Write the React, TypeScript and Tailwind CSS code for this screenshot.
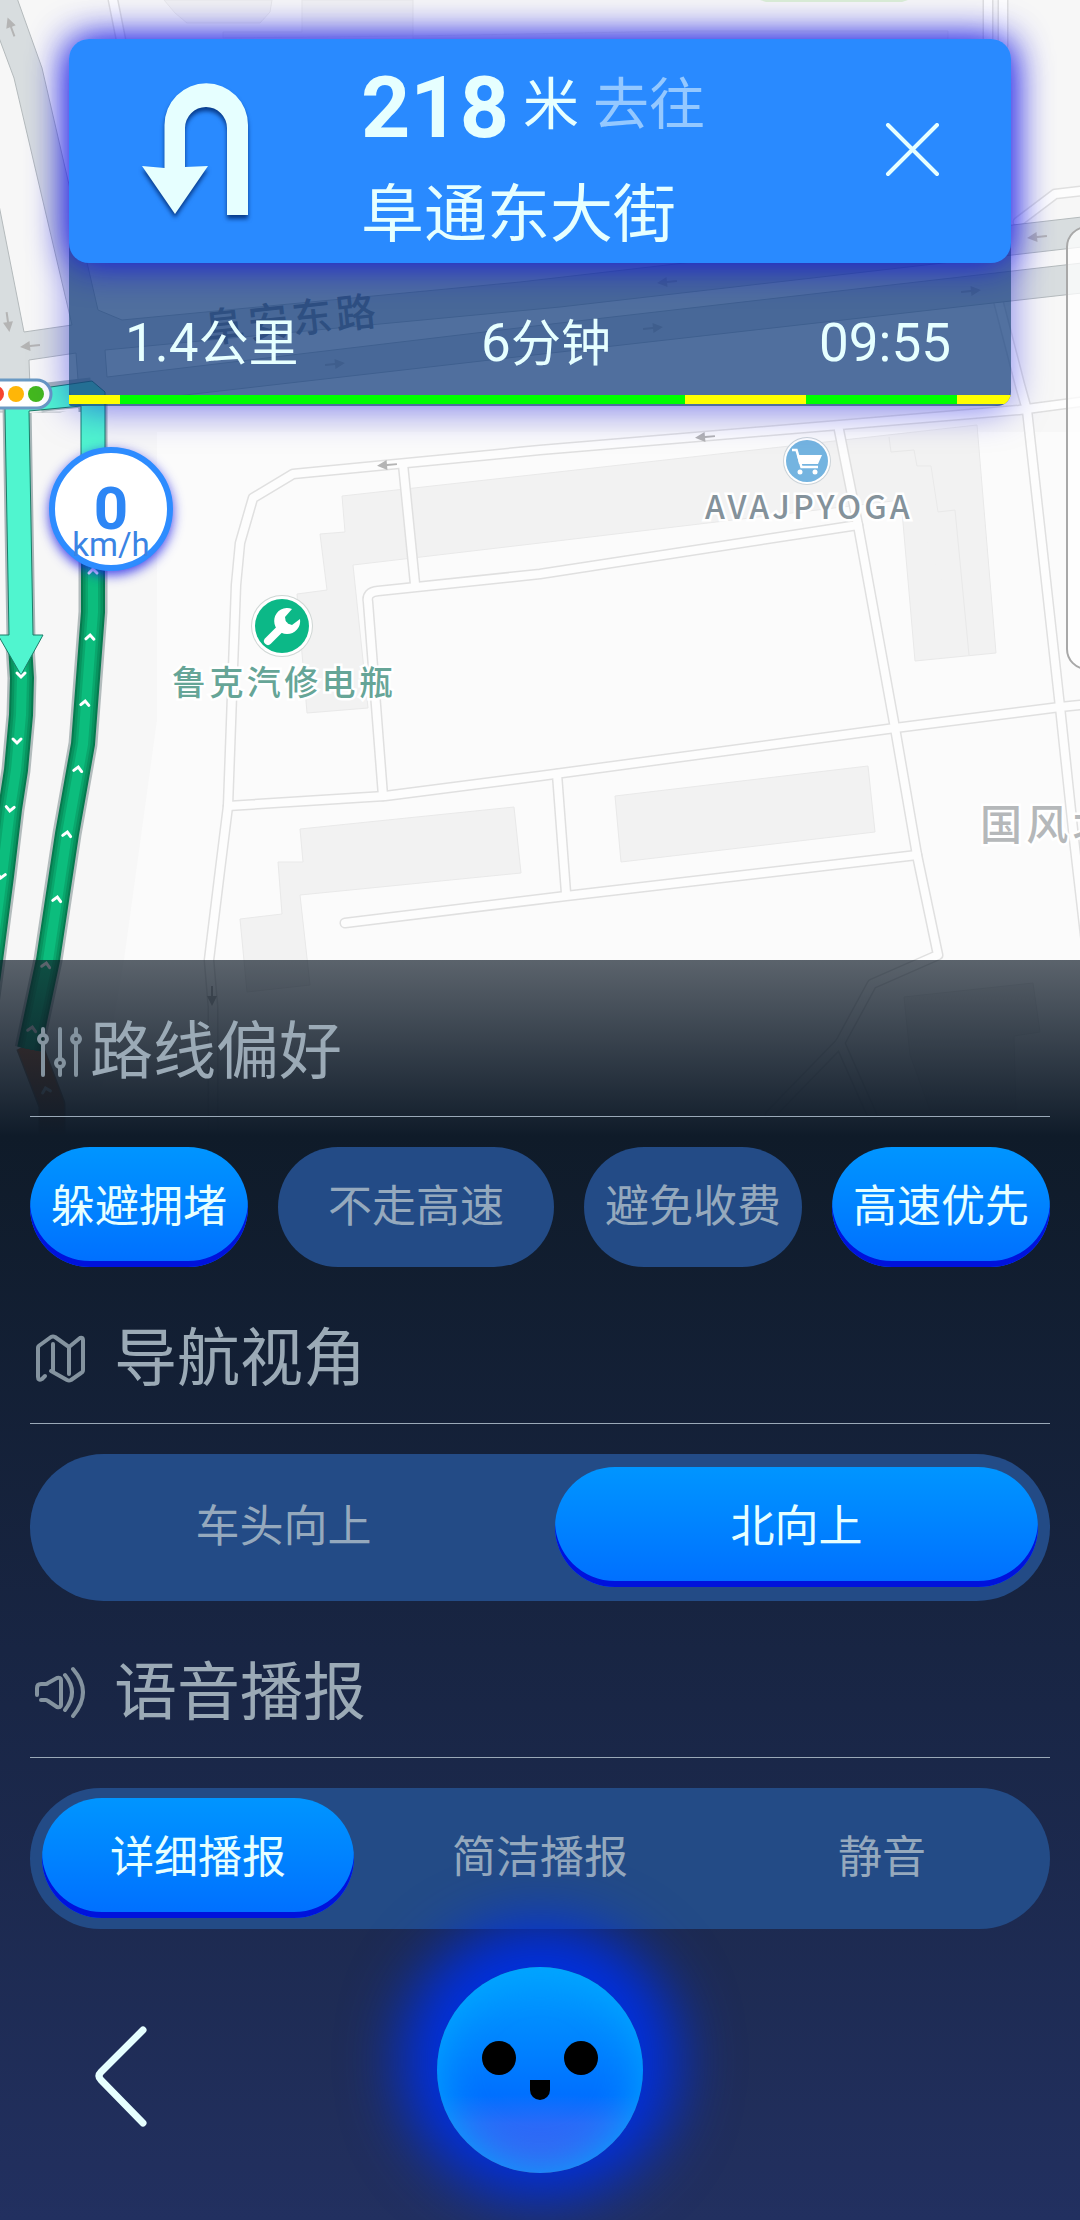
import React, { useState } from 'react';

type IconProps = { className?: string };

const iconStroke = {
    fill: 'none',
    stroke: 'currentColor',
    strokeWidth: 4,
    strokeLinecap: 'round',
    strokeLinejoin: 'round',
} as const;

const SlidersIcon: React.FC<IconProps> = ({ className }) => (
    <svg viewBox="0 0 60 60" className={className} {...iconStroke} aria-hidden="true">
        <path d="M13 12v5M13 27v31M30 12v29M30 51v7M46 12v5M46 27v31" />
        <circle cx="13" cy="22" r="4" />
        <circle cx="30" cy="46" r="4" />
        <circle cx="46" cy="22" r="4" />
    </svg>
);

const MapIcon: React.FC<IconProps> = ({ className }) => (
    <svg viewBox="0 0 60 60" className={className} {...iconStroke} aria-hidden="true">
        <path d="M15 52l-3 3q-4 2-4-2V24q0-2 2-3l11-8q2-1 4 0l14 10 11-9q3-1 3 2v30q0 2-2 3l-10 7q-2 1-4 0L21 47" />
        <path d="M23 20v27M39 23v27" />
    </svg>
);

const SpeakerIcon: React.FC<IconProps> = ({ className }) => (
    <svg viewBox="0 0 60 60" className={className} {...iconStroke} aria-hidden="true">
        <path d="M7 37v-7q0-4 4-4h5q1 0 2-1l9-5q4-1 4 2v25q0 3-4 2l-9-6q-1-1-2-1h-5" />
        <path d="M35 17q14 17 0 35M43 11q20 23 0 47" />
    </svg>
);

const UTurnIcon: React.FC<IconProps> = ({ className }) => (
    <svg viewBox="0 0 110 144" className={className} fill="currentColor" aria-hidden="true">
        <path d="M108 136H87V49a21 21 0 0 0-42 0v39l23-1-33 48L2 87l22.500 2V46a41.750 41.750 0 0 1 83.500 0z" />
    </svg>
);

const Chevron: React.FC<{ x: number; y: number; r: number }> = ({ x, y, r }) => (
    <path d="M-4 2l4-4 4 4" transform={`translate(${x} ${y}) rotate(${r})`} fill="none" stroke="#fff" strokeWidth="3" strokeLinecap="round" />
);

const RoadArrow: React.FC<{ x: number; y: number; r: number }> = ({ x, y, r }) => (
    <path d="M10-1H0v-4l-10 5 10 5V1h10z" transform={`translate(${x} ${y}) rotate(${r})`} fill="#b4b4b4" />
);

// Small lanes inside the blocks
const lanes = [
    'M1080 402L1019 410 540 450 293 474 253 498 240 543 236 585 228 806 220 870 209 960 213 1007 213 1180',
    'M403 464L415 584',
    'M858 525L540 574 378 591Q366 592 368 602L383 796',
    'M228 806L385 796 540 776 895 728 1060 707 1080 705',
    'M839 430L858 525 895 728 917 855 938 955 872 984 840 1043 770 1115',
    'M840 1043L872 1115',
    'M998 300L1020 385 1027 410 1060 707 1074 839 1088 960',
    'M557 774L566 893',
    'M345 923L566 896 917 855',
    'M1018 222L1055 194 1090 190',
    'M113 0L122 45',
    'M988 0V45M1003 0V45',
];

const greenRoutes = [
    'M20 645L22 678 21 715 16 770 10 809 2 876-9 960-16 1010',
    'M93 560V612L83 744 67 834 48 960 29 1049',
];

const MapCanvas: React.FC = () => (
    <svg
        viewBox="0 0 1080 1200"
        preserveAspectRatio="xMidYMin slice"
        className="absolute inset-x-0 top-0 h-[1200px] w-full bg-[#f7f7f7] font-['Noto_Sans_CJK_SC',sans-serif]"
    >
        <path d="M157 432H1080V1200H100V1100L124 960 157 720z" fill="#fbfbfb" />
        <path d="M760 0H908L902 2H766z" fill="#dcefd6" />

        {/* buildings */}
        <g fill="#f2f2f2" stroke="#e9e9e9" strokeWidth="1">
            <path d="M164 0H272L270 12 260 23H187L175 13zM302 0H413V36L223 38V32H302zM413 36L687 31H948V60H413z" />
            <path d="M342 496L540 474 977 425 996 653 915 661 901 500 540 543 353 565 368 708 307 713 297 594 327 590 320 534 345 532z" />
            <path d="M889 437L891 452 914 450 917 466H931L938 512 955 510 969 655" />
            <path d="M300 829L514 807 521 873 300 895 310 985 247 992 240 919 282 914 278 862H303z" />
            <path d="M615 796L868 766 875 832 621 862z" />
            <path d="M904 997L1033 983 1040 1032 1014 1036 1016 1110H930L910 1055z" />
        </g>

        <g fill="none" strokeLinejoin="round" strokeLinecap="round">
            {lanes.map(d => <path key={d} d={d} stroke="#e0e0e0" strokeWidth="11" />)}
            {lanes.map(d => <path key={d} d={d} stroke="#fdfdfd" strokeWidth="8" />)}
        </g>

        {/* main roads */}
        <g fill="#d8dddf" stroke="#b4babc" strokeWidth="1">
            <path d="M-2-2H17L42 68 98 310 122 320 520 282 1030 223 1082 217V293L993 303 560 352 185 395 107 402 60 412H-2z" />
            <path d="M-2 35L14 78 72 325 24 332-2 200z" fill="#f7f7f7" />
            <path d="M105 350L560 307 1082 247V263L978 275 560 323 107 377z" fill="#f7f7f7" />
            <path d="M29 360L76 353 78 380 30 388z" fill="#f7f7f7" />
        </g>
        <RoadArrow x={11} y={27} r={70} />
        <RoadArrow x={8} y={322} r={-98} />
        <RoadArrow x={30} y={346} r={-6} />
        <RoadArrow x={335} y={364} r={174} />
        <RoadArrow x={667} y={282} r={-6} />
        <RoadArrow x={653} y={328} r={174} />
        <RoadArrow x={971} y={291} r={174} />
        <RoadArrow x={1037} y={237} r={-6} />
        <RoadArrow x={387} y={465} r={-5} />
        <RoadArrow x={705} y={437} r={-5} />
        <RoadArrow x={212} y={996} r={-90} />
        <text x="206" y="343" transform="rotate(-6 206 343)" fontSize="40" fontWeight="500" fill="#747c86" className="tracking-widest">阜安东路</text>

        {/* planned route */}
        <g fill="none" strokeLinejoin="round">
            <path d="M29 1045L52 1105V1170" stroke="#9c7a60" strokeWidth="27" />
            <path d="M29 1045L52 1105V1170" stroke="#c86a34" strokeWidth="24" />
            {greenRoutes.map(d => (
                <g key={d}>
                    <path d={d} stroke="#b3bcbd" strokeWidth="29" />
                    <path d={d} stroke="#067a4f" strokeWidth="24" />
                    <path d={d} stroke="#08935f" strokeWidth="20" />
                    <path d={d} stroke="#0aa76d" strokeWidth="15" />
                    <path d={d} stroke="#0cbd7d" strokeWidth="10" />
                </g>
            ))}
            <path d="M17 405L21 640M93 395V530M40 398L92 392" stroke="#a9b6b8" strokeWidth="29" />
        </g>
        <path d="M84 412V535H78V408L29 413V411z" fill="#f7f7f7" />
        <path d="M30 390L92 381 105 392V535H81V406L29 411 33 635H43L21 675-2 635H9L5 411V392z" fill="#50f5cf" stroke="#1b7d68" strokeWidth="1" />
        <g>
            <Chevron x={21} y={675} r={180} />
            <Chevron x={17} y={741} r={180} />
            <Chevron x={10} y={809} r={186} />
            <Chevron x={1} y={876} r={188} />
            <Chevron x={93} y={571} r={0} />
            <Chevron x={90} y={637} r={3} />
            <Chevron x={85} y={703} r={5} />
            <Chevron x={78} y={769} r={8} />
            <Chevron x={67} y={834} r={9} />
            <Chevron x={57} y={899} r={9} />
            <Chevron x={46} y={965} r={10} />
            <Chevron x={32} y={1029} r={10} />
            <Chevron x={46} y={1090} r={-15} />
        </g>

        {/* traffic light */}
        <rect x="-40" y="380" width="91" height="28" rx="14" fill="#fff" stroke="#6a9ac4" strokeWidth="3" />
        <circle cx="-4" cy="394" r="8" fill="#f5452f" />
        <circle cx="16" cy="394" r="8" fill="#ffb607" />
        <circle cx="36" cy="394" r="8" fill="#43b81e" />

        {/* points of interest */}
        <circle cx="282" cy="626" r="31" fill="#cfd6d4" />
        <circle cx="282" cy="626" r="30" fill="#fff" />
        <circle cx="282" cy="626" r="27" fill="#0cb887" />
        <path d="M268 641L284 625" stroke="#fff" strokeWidth="8" strokeLinecap="round" />
        <path d="M292 609a13 13 0 1 0 8 10l-8 6-6-2-1-6z" fill="#fff" />
        <text x="172" y="695" fontSize="34" fontWeight="500" stroke="#fff" strokeWidth="5" paintOrder="stroke" fill="#66a597" className="tracking-widest">鲁克汽修电瓶</text>

        <circle cx="807" cy="461" r="24" fill="#cbd3d8" />
        <circle cx="807" cy="461" r="23" fill="#fff" />
        <circle cx="807" cy="461" r="21" fill="#74b4e0" />
        <path d="M792 450h4.500l5 17h16.500" fill="none" stroke="#fff" strokeWidth="2.500" />
        <path d="M797 455h25l-4 9h-19z" fill="#fff" />
        <circle cx="800" cy="472" r="2.500" fill="#fff" />
        <circle cx="815" cy="472" r="2.500" fill="#fff" />
        <text x="705" y="519" fontSize="32" fontWeight="500" stroke="#fff" strokeWidth="5" paintOrder="stroke" fill="#84929b" className="tracking-widest">AVAJPYOGA</text>

        <text x="980" y="840" fontSize="42" fontWeight="500" stroke="#fff" strokeWidth="5" paintOrder="stroke" fill="#b5b8ba" className="tracking-widest">国风北京</text>

        <rect x="1067" y="227" width="80" height="442" rx="20" fill="#fff" fillOpacity="0.75" stroke="#a8a8a8" strokeWidth="2" />
    </svg>
);

const traffic = [
    { color: 'bg-[#ffff00]', share: 51 },
    { color: 'bg-[#00ff00]', share: 565 },
    { color: 'bg-[#ffff00]', share: 121 },
    { color: 'bg-[#00ff00]', share: 151 },
    { color: 'bg-[#ffff00]', share: 54 },
];

const GuidanceCard: React.FC = () => (
    <header className="relative mx-[69px] mt-[39px] rounded-[20px] shadow-[0_4px_36px_rgba(0,0,225,0.5)]">
        <div className="relative z-10 flex items-center rounded-[20px] bg-[#298aff] px-[71px] text-[#e6ffff] shadow-[0_0_38px_rgba(10,10,230,0.95)]">
            <UTurnIcon className="w-[110px] shrink-0 drop-shadow-[0_4px_2px_rgba(0,40,110,0.8)]" />
            <div className="ml-[111px] flex-1 pt-[18px] pb-[2px]">
                <p className="flex h-[100px] items-center">
                    <span className="text-[86px] font-bold">218</span>
                    <span className="mb-1 ml-[14px] text-[56px]">米</span>
                    <span className="mb-1 ml-[14px] text-[56px] text-[#94c8ff]">去往</span>
                </p>
                <p className="mt-3 text-[63px] leading-[92px]">阜通东大街</p>
            </div>
            <button type="button" aria-label="关闭" className="shrink-0">
                <svg viewBox="0 0 56 56" className="w-[56px]" stroke="currentColor" strokeWidth="4" strokeLinecap="round">
                    <path d="M4 2l49 49M53 2L4 51" />
                </svg>
            </button>
        </div>
        <div className="-mt-5 overflow-hidden rounded-br-[14px] rounded-bl-[2px] bg-[rgba(21,63,127,0.74)] pt-5 pb-[2px]">
            <div className="grid grid-cols-3 px-[56px] pt-[48px] pb-[19px] text-[53px] leading-[64px] text-[#e6ffff]">
                <span>1.4<span className="text-[50px]">公里</span></span>
                <span className="pl-3 text-center">6<span className="text-[50px]">分钟</span></span>
                <span className="pr-1 text-right">09:55</span>
            </div>
            <div className="flex h-[9px]">
                {traffic.map((part, i) => (
                    <div key={i} className={part.color} style={{ flexGrow: part.share }} />
                ))}
            </div>
        </div>
    </header>
);

const Speedometer: React.FC = () => (
    <div className="relative mt-[41px] ml-[49px] flex size-[124px] flex-col items-center rounded-full border-6 border-[#2d8cff] bg-white pt-[34px] text-[#2d86f5] shadow-[0_4px_12px_rgba(20,20,230,0.8)]">
        <span className="text-[60px] leading-[44px] font-bold">0</span>
        <span className="text-[33px] leading-[28px] text-[#3a84e4]">km/h</span>
    </div>
);

const SectionTitle: React.FC<{ icon: React.ReactNode; tight?: boolean; children: React.ReactNode }> = ({ icon, tight, children }) => (
    <h2 className={`mb-[30px] flex items-center border-b border-[#9aa9b8] pt-[46px] pb-[18px] text-[63px] leading-[92px] text-[#9baab6] ${tight ? '' : 'gap-6'}`}>
        <span className="mb-[10px] w-[60px] shrink-0 text-[#84939f]">{icon}</span>
        {children}
    </h2>
);

const activeStyle = 'bg-linear-to-b from-[#0095ff] to-[#006eff] text-[#e6ffff] shadow-[inset_0_-6px_0_#0012dc]';

const Segmented: React.FC<{ label: string; options: string[]; initial: string; className: string }> = ({ label, options, initial, className }) => {
    const [value, setValue] = useState(initial);
    return (
        <div role="group" aria-label={label} className={`flex gap-[30px] rounded-[75px] bg-[#234b86] px-3 ${className}`}>
            {options.map(option => (
                <button
                    key={option}
                    type="button"
                    aria-pressed={value === option}
                    onClick={() => setValue(option)}
                    className={`h-[120px] flex-1 rounded-[60px] text-[44px] ${value === option ? activeStyle : 'text-[#95a9bd]'}`}
                >
                    {option}
                </button>
            ))}
        </div>
    );
};

const routeOptions = ['躲避拥堵', '不走高速', '避免收费', '高速优先'];

const RoutePreferences: React.FC = () => {
    const [selected, setSelected] = useState(['躲避拥堵', '高速优先']);

    const toggle = (name: string) =>
        setSelected(list => (list.includes(name) ? list.filter(n => n !== name) : [...list, name]));

    return (
        <div className="flex gap-[30px]">
            {routeOptions.map((name, i) => (
                <button
                    key={name}
                    type="button"
                    aria-pressed={selected.includes(name)}
                    onClick={() => toggle(name)}
                    className={`h-[120px] rounded-[60px] px-[21px] text-[44px] ${i === 1 ? 'flex-1' : ''} ${selected.includes(name) ? activeStyle : 'bg-[#234b86] text-[#95a9bd]'}`}
                >
                    {name}
                </button>
            ))}
        </div>
    );
};

const Assistant: React.FC = () => (
    <button
        type="button"
        aria-label="语音助手"
        className="size-[206px] justify-self-center rounded-full bg-[linear-gradient(180deg,#00a0ff_0%,#0070ff_62%,#2a6af8_76%,#4060f0_100%)] shadow-[0_-10px_60px_36px_#0030e0,inset_0_0_44px_#00a8ff]"
    >
        <svg viewBox="0 0 206 206" className="w-full">
            <circle cx="62" cy="91" r="17" />
            <circle cx="144" cy="91" r="17" />
            <path d="M93 113h20v10a10 10 0 0 1-20 0z" />
        </svg>
    </button>
);

const App: React.FC = () => (
    <main className="relative flex min-h-screen flex-col overflow-hidden font-['Roboto','Noto_Sans_CJK_SC',sans-serif]">
        <MapCanvas />
        <GuidanceCard />
        <Speedometer />

        <section className="relative mt-auto bg-[linear-gradient(180deg,rgba(15,27,40,0.68)_0%,#0f1b29_14%,#223060_100%)] px-[30px]">
            <SectionTitle tight icon={<SlidersIcon />}>路线偏好</SectionTitle>
            <RoutePreferences />

            <SectionTitle icon={<MapIcon />}>导航视角</SectionTitle>
            <Segmented label="导航视角" options={['车头向上', '北向上']} initial="北向上" className="pt-[13px] pb-[14px]" />

            <SectionTitle icon={<SpeakerIcon />}>语音播报</SectionTitle>
            <Segmented label="语音播报" options={['详细播报', '简洁播报', '静音']} initial="详细播报" className="pt-[10px] pb-[11px]" />

            <footer className="grid grid-cols-3 items-center pt-[38px] pb-[47px]">
                <button type="button" aria-label="返回" className="ml-[60px] w-[60px] pt-3 text-[#e6ffff]">
                    <svg viewBox="0 0 60 110" fill="none" stroke="currentColor" strokeWidth="7" strokeLinecap="round" strokeLinejoin="round">
                        <path d="M53 9L11 51q-4 4 0 8l42 43" />
                    </svg>
                </button>
                <Assistant />
            </footer>
        </section>
    </main>
);

export default App;
